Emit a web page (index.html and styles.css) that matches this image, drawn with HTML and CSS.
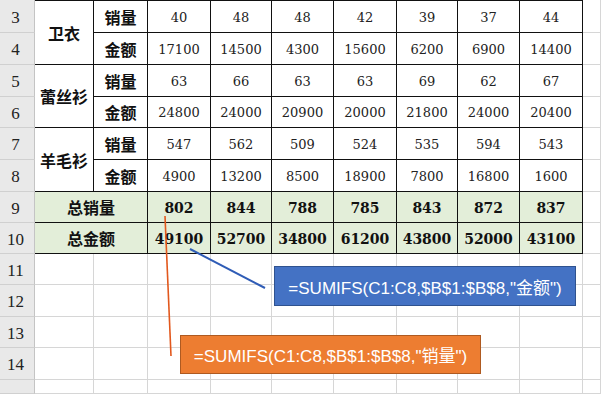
FILE: index.html
```html
<!DOCTYPE html>
<html lang="zh-CN">
<head>
<meta charset="utf-8">
<title>SUMIFS</title>
<link rel="stylesheet" href="styles.css">
</head>
<body>
<div class="sheet">
  <div class="grid">
    <!-- row 3 -->
    <div class="rh">3</div>
    <div class="c lbl top span2r">卫衣</div>
    <div class="c lbl top">销量</div>
    <div class="c num top">40</div><div class="c num top">48</div><div class="c num top">48</div><div class="c num top">42</div><div class="c num top">39</div><div class="c num top">37</div><div class="c num top">44</div>
    <div class="e"></div>
    <!-- row 4 -->
    <div class="rh">4</div>
    <div class="c lbl">金额</div>
    <div class="c num">17100</div><div class="c num">14500</div><div class="c num">4300</div><div class="c num">15600</div><div class="c num">6200</div><div class="c num">6900</div><div class="c num">14400</div>
    <div class="e"></div>
    <!-- row 5 -->
    <div class="rh">5</div>
    <div class="c lbl span2r">蕾丝衫</div>
    <div class="c lbl">销量</div>
    <div class="c num">63</div><div class="c num">66</div><div class="c num">63</div><div class="c num">63</div><div class="c num">69</div><div class="c num">62</div><div class="c num">67</div>
    <div class="e"></div>
    <!-- row 6 -->
    <div class="rh">6</div>
    <div class="c lbl">金额</div>
    <div class="c num">24800</div><div class="c num">24000</div><div class="c num">20900</div><div class="c num">20000</div><div class="c num">21800</div><div class="c num">24000</div><div class="c num">20400</div>
    <div class="e"></div>
    <!-- row 7 -->
    <div class="rh">7</div>
    <div class="c lbl span2r">羊毛衫</div>
    <div class="c lbl">销量</div>
    <div class="c num">547</div><div class="c num">562</div><div class="c num">509</div><div class="c num">524</div><div class="c num">535</div><div class="c num">594</div><div class="c num">543</div>
    <div class="e"></div>
    <!-- row 8 -->
    <div class="rh">8</div>
    <div class="c lbl">金额</div>
    <div class="c num">4900</div><div class="c num">13200</div><div class="c num">8500</div><div class="c num">18900</div><div class="c num">7800</div><div class="c num">16800</div><div class="c num">1600</div>
    <div class="e"></div>
    <!-- row 9 -->
    <div class="rh">9</div>
    <div class="c lbl tot span2c">总销量</div>
    <div class="c tnum tot">802</div><div class="c tnum tot">844</div><div class="c tnum tot">788</div><div class="c tnum tot">785</div><div class="c tnum tot">843</div><div class="c tnum tot">872</div><div class="c tnum tot">837</div>
    <div class="e"></div>
    <!-- row 10 -->
    <div class="rh">10</div>
    <div class="c lbl tot span2c">总金额</div>
    <div class="c tnum tot">49100</div><div class="c tnum tot">52700</div><div class="c tnum tot">34800</div><div class="c tnum tot">61200</div><div class="c tnum tot">43800</div><div class="c tnum tot">52000</div><div class="c tnum tot">43100</div>
    <div class="e"></div>
    <!-- rows 11-15 -->
    <div class="rh">11</div><div class="e"></div><div class="e"></div><div class="e"></div><div class="e"></div><div class="e"></div><div class="e"></div><div class="e"></div><div class="e"></div><div class="e"></div><div class="e"></div>
    <div class="rh">12</div><div class="e"></div><div class="e"></div><div class="e"></div><div class="e"></div><div class="e"></div><div class="e"></div><div class="e"></div><div class="e"></div><div class="e"></div><div class="e"></div>
    <div class="rh">13</div><div class="e"></div><div class="e"></div><div class="e"></div><div class="e"></div><div class="e"></div><div class="e"></div><div class="e"></div><div class="e"></div><div class="e"></div><div class="e"></div>
    <div class="rh">14</div><div class="e"></div><div class="e"></div><div class="e"></div><div class="e"></div><div class="e"></div><div class="e"></div><div class="e"></div><div class="e"></div><div class="e"></div><div class="e"></div>
    <div class="rh"></div><div class="e"></div><div class="e"></div><div class="e"></div><div class="e"></div><div class="e"></div><div class="e"></div><div class="e"></div><div class="e"></div><div class="e"></div><div class="e"></div>
  </div>

  <svg class="lines" width="601" height="394" viewBox="0 0 601 394">
    <line x1="165" y1="216" x2="171" y2="356" stroke="#e2581d" stroke-width="1.6"/>
    <line x1="190" y1="249" x2="265" y2="288" stroke="#2f5cb6" stroke-width="2"/>
  </svg>

  <div class="callout blue">=SUMIFS(C1:C8,$B$1:$B$8,"金额")</div>
  <div class="callout orange">=SUMIFS(C1:C8,$B$1:$B$8,"销量")</div>
</div>
</body>
</html>
```

FILE: styles.css
```css
* { box-sizing: border-box; }
html, body { margin: 0; padding: 0; background: #fff; overflow: hidden; }

.sheet {
  position: relative;
  width: 601px;
  height: 394px;
  overflow: hidden;
}

.grid {
  display: grid;
  grid-template-columns: 35px 59px 54px 63px 61px 62px 63px 61px 62px 63px 1fr;
  grid-template-rows: 33px 32px 32px 31px 32px 32px 31px 31px 31px 32px 31px 32px 1fr;
  width: 601px;
  height: 394px;
}

.rh {
  background: #e9e9e9;
  border-right: 1px solid #c4c4c4;
  border-bottom: 1px solid #d0d0d0;
  font-family: "Liberation Serif", serif;
  font-size: 17px;
  color: #222;
  display: flex;
  align-items: center;
  justify-content: center;
  padding-right: 3px;
  padding-top: 3px;
}

.c {
  border-right: 1px solid #111;
  border-bottom: 1px solid #111;
  display: flex;
  align-items: center;
  justify-content: center;
  color: #111;
  background: #fff;
}
.c.top { border-top: 1px solid #111; }

.e {
  border-right: 1px solid #d6d6d6;
  border-bottom: 1px solid #d6d6d6;
}

.span2r { grid-row: span 2; }
.span2c { grid-column: span 2; }

.lbl {
  font-family: "Noto Sans CJK SC", sans-serif;
  font-weight: 700;
  font-size: 16px;
}

.num {
  font-family: "DejaVu Serif", serif;
  font-size: 13px;
  color: #222;
  padding-top: 1px;
}

.tnum {
  font-family: "DejaVu Serif", serif;
  font-weight: 700;
  font-size: 14px;
  padding-top: 1px;
}

.tot { background: #e3eed9; }

.lines {
  position: absolute;
  left: 0;
  top: 0;
  pointer-events: none;
}

.callout {
  position: absolute;
  display: flex;
  align-items: center;
  justify-content: center;
  color: #fff;
  font-family: "Liberation Sans", "Noto Sans CJK SC", sans-serif;
  font-size: 17px;
  white-space: nowrap;
}
.callout.blue {
  left: 274px;
  top: 266px;
  width: 302px;
  height: 40px;
  background: #4472c4;
  border: 1px solid #2f528f;
}
.callout.orange {
  left: 180px;
  top: 335px;
  width: 301px;
  height: 39px;
  background: #ed7d31;
  border: 1px solid #ae5a21;
}
```
